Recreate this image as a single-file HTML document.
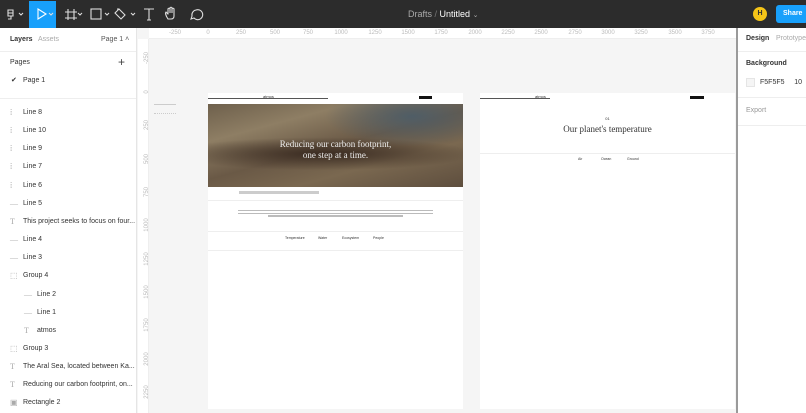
<!DOCTYPE html>
<html><head><meta charset="utf-8"><style>
*{margin:0;padding:0;box-sizing:border-box}
body{width:806px;height:413px;overflow:hidden;background:#f5f5f5;font-family:"Liberation Sans",sans-serif;position:relative;font-size:7px;color:#333}
.a{position:absolute}
.tb{left:0;top:0;width:806px;height:28px;background:#2c2c2c}
.lp{left:0;top:28px;width:137px;height:385px;background:#fff;border-right:1px solid #e5e5e5}
.rp{left:736px;top:28px;width:70px;height:385px;background:#fff;border-left:2px solid #9a9a9a}
.row{position:absolute;left:0;width:137px;height:18px;font-size:7px;color:#333;line-height:18px}
.row i{position:absolute;left:10px;top:0;color:#aaa;font-style:normal;font-family:"Liberation Serif",serif;font-size:8px}
.row span{position:absolute;left:23px}
.hr{left:149px;top:28px;width:587px;height:11px;background:#fff;border-bottom:1px solid #eee}
.vr{left:138px;top:39px;width:11px;height:374px;background:#fff;border-right:1px solid #eee}
.hn{position:absolute;top:30px;font-size:6px;color:#bbb;transform:translateX(-50%)}
.vn{position:absolute;left:139px;font-size:6px;color:#bbb;transform:rotate(-90deg);transform-origin:center;width:16px;text-align:center}
.fr{background:#fff}
</style></head><body>
<div class="a tb"></div>
<div class="a" style="left:29px;top:1px;width:27px;height:27px;background:#18a0fb"></div>
<svg class="a" style="left:0;top:0" width="210" height="28">
<g fill="none" stroke="#ddd" stroke-width="1.1">
<path d="M8 10h5v3h-5zM8 13h5v3h-5zM8 16h3v3h-3"/>
<path d="M19 13l2 2 2-2M49 13l2 2 2-2M78 13l2 2 2-2M105 13l2 2 2-2M131 13l2 2 2-2"/>
<path d="M38 9l8 5-8 5z" stroke="#fff"/>
<path d="M68 9v11M74 9v11M65 12h12M65 18h12"/>
<rect x="91" y="9" width="10" height="10"/>
<path d="M119 9l6 6-4 4-6-6z M117 9h2"/>
<path d="M144 9h10M149 9v11M147 20h4"/>
<path d="M168 19c-2-3-3-6-2-7 1 0 1 2 2 2v-5c0-1 2-1 2 0v4-5c0-1 2-1 2 0v5-4c0-1 2-1 2 0v7c0 2-1 3-3 3z"/>
<path d="M196 10a5 5 0 1 1-2 8l-3 1 1-3a5 5 0 0 1 4-6z"/>
</g></svg>
<div class="a" style="left:408px;top:9px;font-size:9px;color:#aaa">Drafts <span style="color:#777">/</span> <span style="color:#fff">Untitled</span> <span style="color:#aaa;font-size:7px">⌄</span></div>
<div class="a" style="left:753px;top:7px;width:14px;height:14px;border-radius:50%;background:#f5c518;font-size:7px;font-weight:bold;color:#333;text-align:center;line-height:14px">H</div>
<div class="a" style="left:776px;top:5px;width:32px;height:18px;border-radius:3px;background:#18a0fb;color:#fff;font-size:7px;font-weight:bold;line-height:18px;padding-left:7px">Share</div>

<div class="a lp">
<div class="a" style="left:10px;top:8px;font-size:7px;font-weight:bold;color:#333">Layers</div>
<div class="a" style="left:38px;top:8px;font-size:7px;color:#aaa">Assets</div>
<div class="a" style="left:101px;top:8px;font-size:7px;color:#555">Page 1 ˄</div>
<div class="a" style="left:0;top:23px;width:136px;border-top:1px solid #eee"></div>
<div class="a" style="left:10px;top:31px;font-size:7px;color:#333">Pages</div>
<div class="a" style="left:118px;top:27px;font-size:12px;color:#444">+</div>
<div class="a" style="left:11px;top:48px;font-size:7px">✔</div>
<div class="a" style="left:23px;top:49px;font-size:7px">Page 1</div>
<div class="a" style="left:0;top:70px;width:136px;border-top:1px solid #eee"></div>
</div>
<div class="row" style="top:104px"><i>⁞</i><span>Line 8</span></div>
<div class="row" style="top:122px"><i>⁞</i><span>Line 10</span></div>
<div class="row" style="top:140px"><i>⁞</i><span>Line 9</span></div>
<div class="row" style="top:158px"><i>⁞</i><span>Line 7</span></div>
<div class="row" style="top:177px"><i>⁞</i><span>Line 6</span></div>
<div class="row" style="top:195px"><i>—</i><span>Line 5</span></div>
<div class="row" style="top:213px"><i>T</i><span>This project seeks to focus on four...</span></div>
<div class="row" style="top:231px"><i>—</i><span>Line 4</span></div>
<div class="row" style="top:249px"><i>—</i><span>Line 3</span></div>
<div class="row" style="top:267px"><i>⬚</i><span>Group 4</span></div>
<div class="row" style="top:286px"><i style="left:24px">—</i><span style="left:37px">Line 2</span></div>
<div class="row" style="top:304px"><i style="left:24px">—</i><span style="left:37px">Line 1</span></div>
<div class="row" style="top:322px"><i style="left:24px">T</i><span style="left:37px">atmos</span></div>
<div class="row" style="top:340px"><i>⬚</i><span>Group 3</span></div>
<div class="row" style="top:358px"><i>T</i><span>The Aral Sea, located between Ka...</span></div>
<div class="row" style="top:376px"><i>T</i><span>Reducing our carbon footprint, on...</span></div>
<div class="row" style="top:394px"><i>▣</i><span>Rectangle 2</span></div>

<div class="a hr"></div><div class="a vr"></div>
<div class="hn" style="left:175px">-250</div><div class="hn" style="left:208px">0</div><div class="hn" style="left:241px">250</div><div class="hn" style="left:275px">500</div><div class="hn" style="left:308px">750</div><div class="hn" style="left:341px">1000</div><div class="hn" style="left:375px">1250</div><div class="hn" style="left:408px">1500</div><div class="hn" style="left:441px">1750</div><div class="hn" style="left:475px">2000</div><div class="hn" style="left:508px">2250</div><div class="hn" style="left:541px">2500</div><div class="hn" style="left:575px">2750</div><div class="hn" style="left:608px">3000</div><div class="hn" style="left:641px">3250</div><div class="hn" style="left:675px">3500</div><div class="hn" style="left:708px">3750</div>
<div class="vn" style="top:55px">-250</div><div class="vn" style="top:89px">0</div><div class="vn" style="top:122px">250</div><div class="vn" style="top:156px">500</div><div class="vn" style="top:189px">750</div><div class="vn" style="top:222px">1000</div><div class="vn" style="top:256px">1250</div><div class="vn" style="top:289px">1500</div><div class="vn" style="top:322px">1750</div><div class="vn" style="top:356px">2000</div><div class="vn" style="top:389px">2250</div>

<div class="a" style="left:154px;top:104px;width:22px;height:10px;border-top:1px solid #ccc;border-bottom:1px dotted #ccc"></div>

<div class="a fr" style="left:208px;top:93px;width:255px;height:316px">
<div class="a" style="left:0;top:5px;width:120px;border-top:1px solid #555"></div>
<div class="a" style="left:55px;top:1px;font-size:4px;color:#333">atmos</div>
<div class="a" style="left:211px;top:3px;width:13px;height:3px;background:#111"></div>
<div class="a" style="left:0;top:11px;width:255px;height:83px;background:radial-gradient(ellipse at 80% 15%,#4f5d66 0%,transparent 30%),radial-gradient(ellipse 60% 20% at 45% 60%,#3b2c22 0%,transparent 100%),linear-gradient(165deg,#6e604c 0%,#8e7e64 25%,#6a5946 50%,#7a6850 70%,#5e4e3e 100%)"></div>
<div class="a" style="left:0;top:46px;width:255px;text-align:center;font-family:'Liberation Serif',serif;font-size:9px;color:#eee;line-height:11px">Reducing our carbon footprint,<br>one step at a time.</div>
<div class="a" style="left:31px;top:98px;width:80px;height:3px;background:#ccc"></div>
<div class="a" style="left:0;top:107px;width:255px;border-top:1px solid #eee"></div>
<div class="a" style="left:30px;top:116px;width:195px;height:5px;background:repeating-linear-gradient(#fff 0 1px,#bbb 1px 2px,#fff 2px 3px)"></div>
<div class="a" style="left:60px;top:122px;width:135px;height:2px;background:#bbb"></div>
<div class="a" style="left:0;top:138px;width:255px;border-top:1px solid #eee"></div>
<div class="a" style="left:0;top:157px;width:255px;border-top:1px solid #eee"></div>
<div class="a" style="left:77px;top:143px;font-size:3.5px">Temperature</div>
<div class="a" style="left:110px;top:143px;font-size:3.5px">Water</div>
<div class="a" style="left:134px;top:143px;font-size:3.5px">Ecosystem</div>
<div class="a" style="left:165px;top:143px;font-size:3.5px">People</div>
</div>

<div class="a fr" style="left:480px;top:93px;width:255px;height:316px">
<div class="a" style="left:0;top:5px;width:70px;border-top:1px solid #555"></div>
<div class="a" style="left:55px;top:1px;font-size:4px;color:#333">atmos</div>
<div class="a" style="left:210px;top:3px;width:14px;height:3px;background:#111"></div>
<div class="a" style="left:0;top:23px;width:255px;text-align:center;font-size:4px">01</div>
<div class="a" style="left:0;top:31px;width:255px;text-align:center;font-family:'Liberation Serif',serif;font-size:9px;color:#333">Our planet's temperature</div>
<div class="a" style="left:0;top:60px;width:255px;border-top:1px solid #eee"></div>
<div class="a" style="left:98px;top:64px;font-size:3.5px">Air</div>
<div class="a" style="left:121px;top:64px;font-size:3.5px">Ocean</div>
<div class="a" style="left:147px;top:64px;font-size:3.5px">Ground</div>
</div>

<div class="a rp">
<div class="a" style="left:8px;top:7px;font-size:7px;font-weight:bold;color:#333">Design</div>
<div class="a" style="left:38px;top:7px;font-size:7px;color:#aaa;white-space:nowrap">Prototype</div>
<div class="a" style="left:0;top:23px;width:70px;border-top:1px solid #eee"></div>
<div class="a" style="left:8px;top:32px;font-size:7px;font-weight:bold;color:#333">Background</div>
<div class="a" style="left:8px;top:50px;width:9px;height:9px;background:#f5f5f5;border:1px solid #e5e5e5"></div>
<div class="a" style="left:22px;top:51px;font-size:7px;color:#333;white-space:nowrap">F5F5F5 &nbsp;&nbsp;&nbsp;&nbsp;10</div>
<div class="a" style="left:0;top:69px;width:70px;border-top:1px solid #eee"></div>
<div class="a" style="left:8px;top:79px;font-size:7px;color:#999">Export</div>
<div class="a" style="left:0;top:97px;width:70px;border-top:1px solid #eee"></div>
</div>
</body></html>
